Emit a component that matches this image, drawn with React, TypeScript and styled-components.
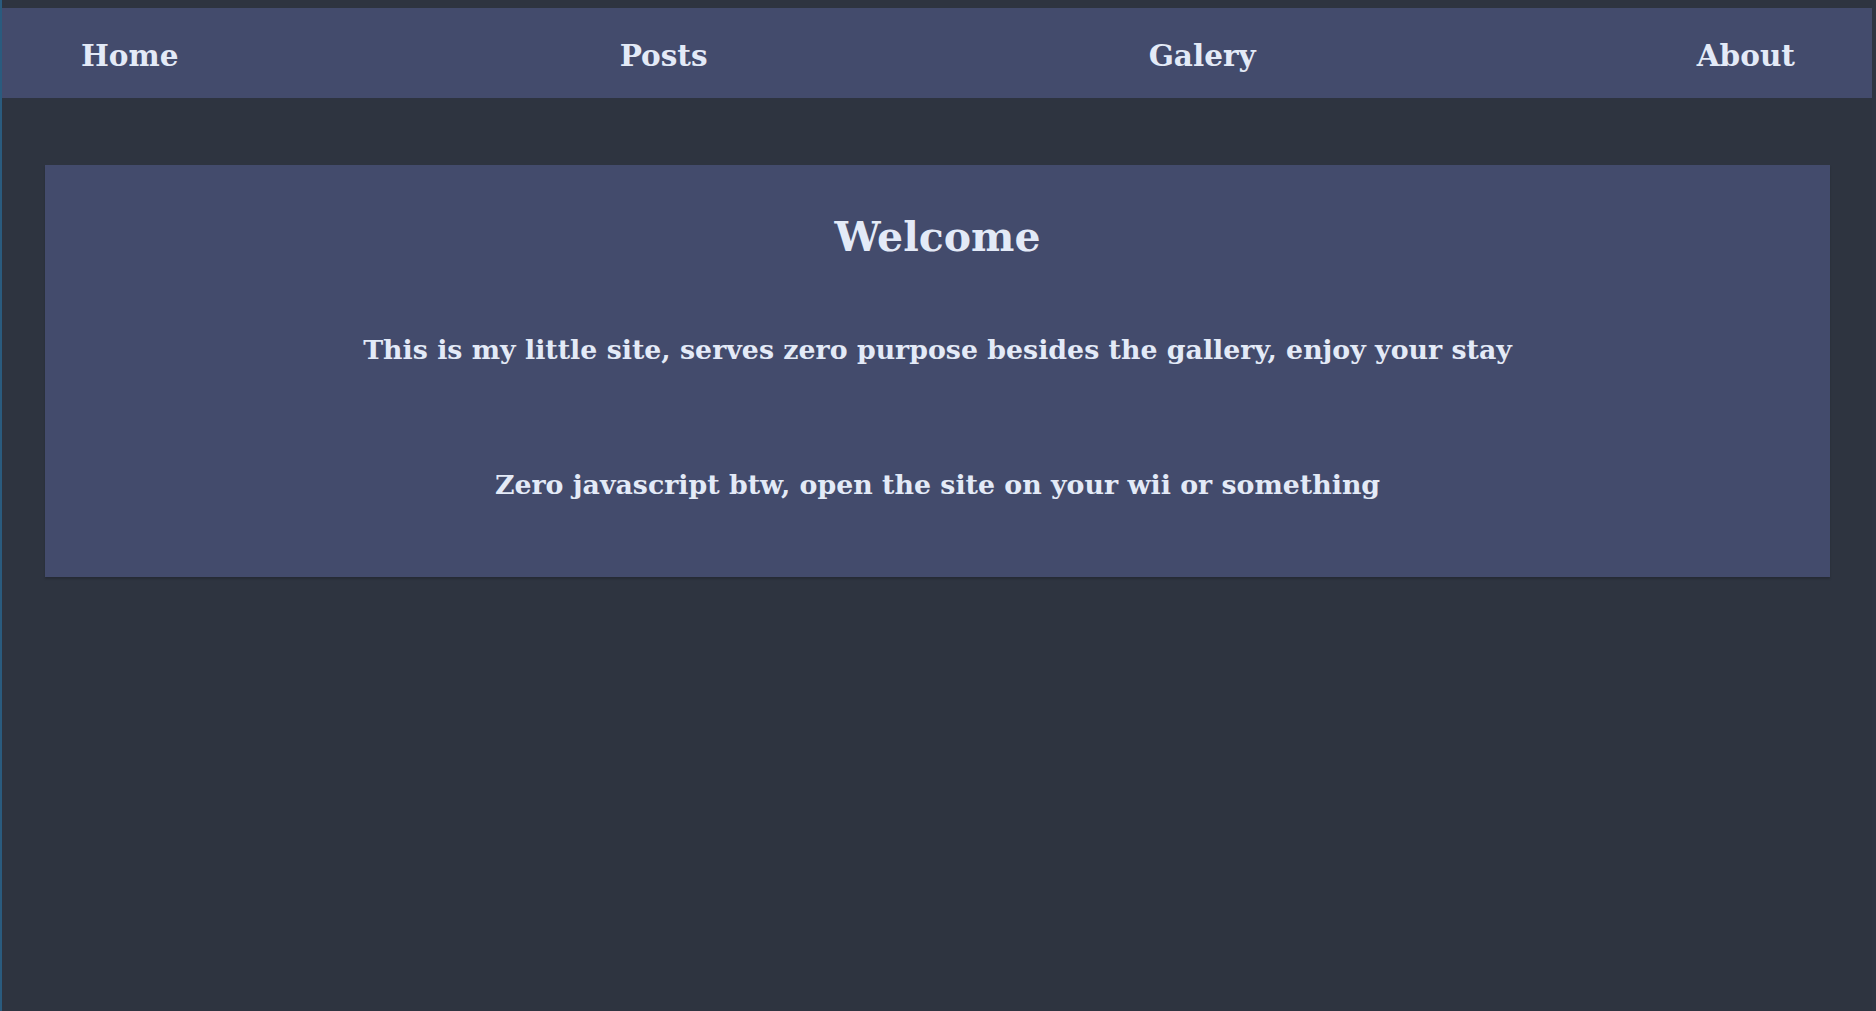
import styled, { createGlobalStyle } from "styled-components";

const GlobalStyle = createGlobalStyle`
  html, body {
    margin: 0;
    padding: 0;
    background: #2e3440;
  }

  body {
    min-height: 1011px;
    box-sizing: border-box;
    padding-top: 8px;
    border-left: 2px solid #2a5b7e;
    border-right: 4px solid #2f3542;
    font-family: "DejaVu Serif", "Liberation Serif", serif;
    color: #e3eaf7;
  }

  a {
    color: inherit;
    text-decoration: none;
  }
`;

const links = ["Home", "Posts", "Galery", "About"];

export default function App() {
  return (
    <>
      <GlobalStyle />
      <Nav>
        {links.map((label) => (
          <NavLink key={label} href={`#${label.toLowerCase()}`}>
            {label}
          </NavLink>
        ))}
      </Nav>

      <Main>
        <Card>
          <Title>Welcome</Title>
          <Text>
            This is my little site, serves zero purpose besides the gallery, enjoy your stay
          </Text>
          <Text $gap={100}>Zero javascript btw, open the site on your wii or something</Text>
        </Card>
      </Main>
    </>
  );
}

const Nav = styled.nav`
  height: 90px;
  display: flex;
  align-items: center;
  justify-content: space-between;
  padding: 0 77px 0 79px;
  background: #434b6c;
`;

const NavLink = styled.a`
  font-size: 29.5px;
  font-weight: 700;
  line-height: 1;
  margin-top: 5px;
`;

const Main = styled.main`
  padding: 67px 42px 0 43px;
`;

const Card = styled.section`
  background: #434b6c;
  padding: 48px 20px 74px;
  text-align: center;
  box-shadow: 0 2px 2px rgba(0, 0, 0, 0.18);
`;

const Title = styled.h1`
  margin: 0;
  font-size: 41px;
  line-height: 1.2;
  font-weight: 700;
`;

const Text = styled.p<{ $gap?: number }>`
  margin: ${({ $gap }) => $gap ?? 71}px 0 0;
  font-size: 26.8px;
  line-height: 1.3;
  font-weight: 700;
`;
